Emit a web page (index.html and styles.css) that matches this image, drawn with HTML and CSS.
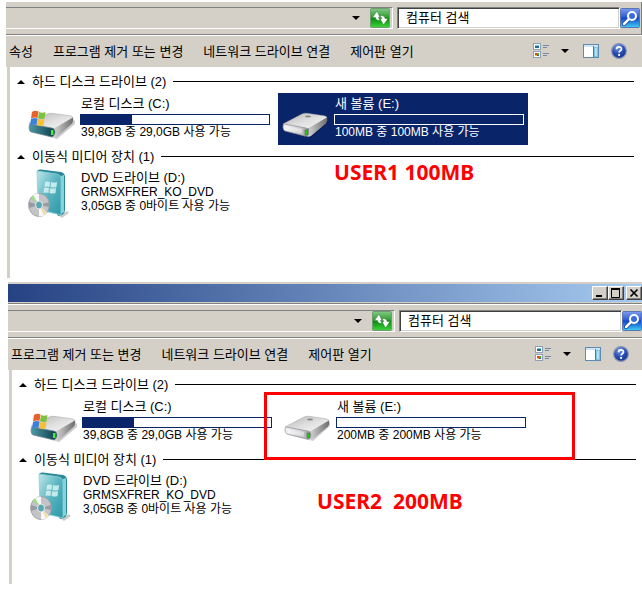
FILE: index.html
```html
<!DOCTYPE html>
<html lang="ko">
<head>
    <meta charset="UTF-8">
    <meta name="viewport" content="width=device-width, initial-scale=1.0">
    <title>컴퓨터</title>
    <link rel="stylesheet" href="styles.css">
</head>
<body>
    <svg class="defs" aria-hidden="true">
        <defs>
            <linearGradient id="green" x1="0" y1="0" x2="0" y2="1">
                <stop offset="0" stop-color="#84c884"/><stop offset=".45" stop-color="#2f9e35"/>
                <stop offset=".5" stop-color="#078a0d"/><stop offset="1" stop-color="#3fd43c"/>
            </linearGradient>
            <linearGradient id="blue" x1="0" y1="0" x2="0" y2="1">
                <stop offset="0" stop-color="#7d9cec"/><stop offset=".45" stop-color="#2c5bd6"/>
                <stop offset=".5" stop-color="#1446c4"/><stop offset="1" stop-color="#3fd0f8"/>
            </linearGradient>
            <linearGradient id="top" x1="0" y1="0" x2="1" y2="1">
                <stop offset="0" stop-color="#b4b4b4"/><stop offset=".5" stop-color="#dedede"/><stop offset="1" stop-color="#fafafa"/>
            </linearGradient>
            <linearGradient id="side" x1="0" y1="0" x2="1" y2="0">
                <stop offset="0" stop-color="#d8d8d8"/><stop offset="1" stop-color="#6c6c6c"/>
            </linearGradient>
            <linearGradient id="front" x1="0" y1="0" x2="1" y2="0">
                <stop offset="0" stop-color="#f4f4f6"/><stop offset=".7" stop-color="#c6c6cc"/><stop offset="1" stop-color="#8c8c90"/>
            </linearGradient>
            <linearGradient id="teal" x1="0" y1="0" x2="1" y2="0">
                <stop offset="0" stop-color="#4c9aa6"/><stop offset="1" stop-color="#0c3c48"/>
            </linearGradient>
            <linearGradient id="case" x1="0" y1="0" x2="1" y2="1">
                <stop offset="0" stop-color="#bfe6ea"/><stop offset=".5" stop-color="#58b4c0"/><stop offset="1" stop-color="#2c98a8"/>
            </linearGradient>
            <radialGradient id="help" cx=".4" cy=".25" r=".8">
                <stop offset="0" stop-color="#7c9ce8"/><stop offset=".5" stop-color="#2c50b8"/><stop offset="1" stop-color="#14308c"/>
            </radialGradient>
        </defs>

        <symbol id="icon-refresh" viewBox="0 0 20 20">
            <rect x=".5" y=".5" width="19" height="19" rx="1" fill="url(#green)" stroke="#6f9c70"/>
            <path d="M7 3L2.500 9.500H5.500Q5.500 12.500 9.500 12.500V10.500Q8.500 10.500 8.500 9.500H10z" fill="#fff" stroke="#2b7a30" stroke-width=".5"/>
            <path d="M13.500 17L18 10.500H15Q15 7.500 10.500 7.500V9.500Q12 9.500 12 10.500H10z" fill="#fff" stroke="#2b7a30" stroke-width=".5"/>
        </symbol>
        <symbol id="icon-search" viewBox="0 0 20 20">
            <rect x=".5" y=".5" width="19" height="19" rx="1" fill="url(#blue)" stroke="#5c74b4"/>
            <path d="M9 11l-5 5" stroke="#123c9c" stroke-width="4" stroke-linecap="round"/>
            <path d="M9 11l-5 5" stroke="#fff" stroke-width="2.500" stroke-linecap="round"/>
            <circle cx="12" cy="8" r="4" fill="#3a6cdc" stroke="#fff" stroke-width="2"/>
        </symbol>
        <symbol id="icon-views" viewBox="0 0 16 16">
            <rect x=".5" y=".5" width="7" height="6" fill="#fff" stroke="#8ca0b8"/>
            <path d="M2 2h4v1H2z" fill="#7cc4ec"/><path d="M2 3h4v2H2z" fill="#20708c"/>
            <rect x=".5" y="8.500" width="7" height="6" fill="#fff" stroke="#8ca0b8"/>
            <path d="M2 10h2v2H2z" fill="#e83c20"/><path d="M4 10h2v2H4z" fill="#48b030"/>
            <path d="M2 12h2v1H2z" fill="#f0c020"/><path d="M4 12h2v1H4z" fill="#2858c8"/>
            <path d="M10 2.500h6M10 4.500h4M10 10.500h6M10 12.500h4" stroke="#7888a0"/>
        </symbol>
        <symbol id="icon-pane" viewBox="0 0 16 14">
            <rect x=".5" y=".5" width="15" height="13" fill="#fff" stroke="#5c8cb0"/>
            <path d="M1 1h14v2H1z" fill="#d0e4f4"/>
            <path d="M10 3h5v10h-5z" fill="#7cc4e0"/><path d="M10.500 2v11" stroke="#4080a8"/>
            <path d="M12 4h2v8h-2z" fill="#b4e0f0"/>
        </symbol>
        <symbol id="icon-help" viewBox="0 0 16 16">
            <circle cx="8" cy="8" r="7.400" fill="url(#help)" stroke="#8c98b4" stroke-width="1.200"/>
            <path d="M5.600 6.200C5.600 3.200 10.500 3.200 10.500 6c0 1.800-2.400 1.800-2.400 3.600" fill="none" stroke="#fff" stroke-width="1.700"/>
            <circle cx="8.100" cy="11.900" r="1.100" fill="#fff"/>
        </symbol>
        <symbol id="icon-drive" viewBox="0 0 48 48">
            <path d="M6 37l24 6 17-15v-4L27 39z" fill="#000" opacity=".18"/>
            <path d="M2 29L21 19q2-1 5-.700l17 2.500q3 .6 3 2L29 33q-2 1-5 .6L4 30z" fill="url(#top)" stroke="#a4a4a4" stroke-width=".5"/>
            <path d="M28 33L46 22.500q1 3-1 6L30 41q-2 1-4 .500z" fill="url(#side)"/>
            <path d="M3 29l22 4q3 .5 3 4t-3 4.300L4 36q-2-1-2-4t1-3z" fill="url(#front)" stroke="#909090" stroke-width=".7"/>
            <path d="M5 31l16 3v4L5 35z" fill="#fff" opacity=".4"/>
            <path d="M24 35h2.500v5H24z" fill="#28c818" stroke="#386830" stroke-width=".5"/>
            <ellipse cx="27" cy="21.500" rx="3" ry="1" fill="#888"/>
        </symbol>
        <symbol id="icon-system" viewBox="0 0 48 48">
            <path d="M6 37l24 7 18-15v-4L28 40z" fill="#000" opacity=".2"/>
            <path d="M2 28L20 19q2-1 5-.700l18 2.500q3 .6 3 2L29 33q-2 1-5 .6L4 30z" fill="url(#top)" stroke="#a4a4a4" stroke-width=".5"/>
            <path d="M28 33L46 22.500q1 3-1 6L30 42q-2 1-4 .500z" fill="url(#side)"/>
            <path d="M3 29l22 4q3 .5 3 4t-3 5L4 37q-2-1-2-4t1-4z" fill="url(#teal)" stroke="#789" stroke-width=".7"/>
            <path d="M24 35h2.500v5H24z" fill="#48f030"/>
            <path d="M5 17q3-2 6.500-.500l-1 6.500q-3-1-6.500 .5z" fill="#e8602c"/>
            <path d="M12 17q3 1.500 6.500 0l-1 6.500q-3 1-6.500-.5z" fill="#80c040"/>
            <path d="M4 24q3-1.500 6.500-.500l-1 6.500q-3-1-6.500 .5z" fill="#3c80d8"/>
            <path d="M11 24q3 1 6.500 0l-1 6.500q-3 1-6.500-.5z" fill="#f8c030"/>
        </symbol>
        <symbol id="icon-dvd" viewBox="0 0 48 52">
            <path d="M32 48l8-5 2 2-7 5z" fill="#000" opacity=".2"/>
            <path d="M10 3q1-2 4-1.500L34 4q4 1 4 5v33q0 3-3 5l-4 1z" fill="#2a8998"/>
            <path d="M10 3l20 3q4 1 4 5v36L13 42q-2-1-2-4z" fill="url(#case)" stroke="#8ed0d8" stroke-width=".8"/>
            <path d="M34 8l3-1v37l-3 2z" fill="#84d4dc"/>
            <g fill="#d8f4f4" opacity=".85">
                <path d="M18 14q2-1 5 0l-.5 5q-3-1-5 0z"/><path d="M24 14q3 1 6 0l-.5 5q-3 1-6 0z"/>
                <path d="M17 20q2-1 5 0l-.5 5q-3-1-5 0z"/><path d="M23 20q3 1 6 0l-.5 5q-3 1-6 0z"/>
            </g>
            <ellipse cx="12" cy="37" rx="10.500" ry="11.500" fill="#c4c4c8" stroke="#949498" stroke-width=".7"/>
            <path d="M12 37L5 28q3-3 7-2.500zM12 37l8 8q-4 4-8 3.500z" fill="#f8f8fa"/>
            <path d="M12 37l10-3v5zM12 37L2 40v-6z" fill="#9a9aa2"/>
            <path d="M12 37L4 30l2-3z" fill="#98e080"/><path d="M12 37l5 10 2-2z" fill="#f0dc90"/>
            <ellipse cx="12" cy="37" rx="3.500" ry="4" fill="#58a8b4" stroke="#e8e8e8"/>
        </symbol>
    </svg>

    <section class="window window-first">
        <div class="nav">
            <div class="address">
                <span class="caret"></span>
                <button class="icon-btn" aria-label="새로 고침"><svg><use href="#icon-refresh"/></svg></button>
            </div>
            <input class="search" type="text" value="컴퓨터 검색" aria-label="컴퓨터 검색">
            <button class="icon-btn" aria-label="검색"><svg><use href="#icon-search"/></svg></button>
        </div>
        <div class="toolbar">
            <button>속성</button>
            <button>프로그램 제거 또는 변경</button>
            <button>네트워크 드라이브 연결</button>
            <button>제어판 열기</button>
            <div class="tools">
                <button aria-label="보기"><svg class="views"><use href="#icon-views"/></svg></button>
                <button class="more" aria-label="추가 옵션"><span class="caret"></span></button>
                <button aria-label="미리 보기 창"><svg class="pane"><use href="#icon-pane"/></svg></button>
                <button aria-label="도움말"><svg class="help"><use href="#icon-help"/></svg></button>
            </div>
        </div>
        <div class="content">
            <h2 class="group">하드 디스크 드라이브 (2)</h2>
            <ul class="drives">
                <li class="drive">
                    <svg class="drive-icon"><use href="#icon-system"/></svg>
                    <div class="info">
                        <p class="name">로컬 디스크 (C:)</p>
                        <div class="bar"><div class="used" style="width: 27%"></div></div>
                        <p class="detail">39,8GB 중 29,0GB 사용 가능</p>
                    </div>
                </li>
                <li class="drive selected">
                    <svg class="drive-icon"><use href="#icon-drive"/></svg>
                    <div class="info">
                        <p class="name">새 볼륨 (E:)</p>
                        <div class="bar"></div>
                        <p class="detail">100MB 중 100MB 사용 가능</p>
                    </div>
                </li>
            </ul>
            <h2 class="group">이동식 미디어 장치 (1)</h2>
            <ul class="drives">
                <li class="drive media">
                    <svg class="drive-icon"><use href="#icon-dvd"/></svg>
                    <div class="info">
                        <p class="name">DVD 드라이브 (D:)</p>
                        <p class="detail">GRMSXFRER_KO_DVD</p>
                        <p class="detail">3,05GB 중 0바이트 사용 가능</p>
                    </div>
                </li>
            </ul>
        </div>
        <p class="note note-first">USER1 100MB</p>
    </section>

    <section class="window window-second">
        <div class="titlebar">
            <button aria-label="최소화"><svg viewBox="0 0 12 10"><path d="M2 8h6" stroke="#000" stroke-width="2"/></svg></button>
            <button aria-label="최대화"><svg viewBox="0 0 12 10"><path d="M1 1h9M1.500 1v8.500h8V1" fill="none" stroke="#000"/><path d="M1 1h9" stroke="#000" stroke-width="2"/></svg></button>
            <button class="close" aria-label="닫기"><svg viewBox="0 0 12 10"><path d="M2.500 1.500l7 7M9.500 1.500l-7 7" stroke="#000" stroke-width="1.700"/></svg></button>
        </div>
        <div class="nav">
            <div class="address">
                <span class="caret"></span>
                <button class="icon-btn" aria-label="새로 고침"><svg><use href="#icon-refresh"/></svg></button>
            </div>
            <input class="search" type="text" value="컴퓨터 검색" aria-label="컴퓨터 검색">
            <button class="icon-btn" aria-label="검색"><svg><use href="#icon-search"/></svg></button>
        </div>
        <div class="toolbar">
            <button>프로그램 제거 또는 변경</button>
            <button>네트워크 드라이브 연결</button>
            <button>제어판 열기</button>
            <div class="tools">
                <button aria-label="보기"><svg class="views"><use href="#icon-views"/></svg></button>
                <button class="more" aria-label="추가 옵션"><span class="caret"></span></button>
                <button aria-label="미리 보기 창"><svg class="pane"><use href="#icon-pane"/></svg></button>
                <button aria-label="도움말"><svg class="help"><use href="#icon-help"/></svg></button>
            </div>
        </div>
        <div class="content">
            <h2 class="group">하드 디스크 드라이브 (2)</h2>
            <ul class="drives">
                <li class="drive">
                    <svg class="drive-icon"><use href="#icon-system"/></svg>
                    <div class="info">
                        <p class="name">로컬 디스크 (C:)</p>
                        <div class="bar"><div class="used" style="width: 27%"></div></div>
                        <p class="detail">39,8GB 중 29,0GB 사용 가능</p>
                    </div>
                </li>
                <li class="drive">
                    <svg class="drive-icon"><use href="#icon-drive"/></svg>
                    <div class="info">
                        <p class="name">새 볼륨 (E:)</p>
                        <div class="bar"></div>
                        <p class="detail">200MB 중 200MB 사용 가능</p>
                    </div>
                    <div class="highlight"></div>
                </li>
            </ul>
            <h2 class="group">이동식 미디어 장치 (1)</h2>
            <ul class="drives">
                <li class="drive media">
                    <svg class="drive-icon"><use href="#icon-dvd"/></svg>
                    <div class="info">
                        <p class="name">DVD 드라이브 (D:)</p>
                        <p class="detail">GRMSXFRER_KO_DVD</p>
                        <p class="detail">3,05GB 중 0바이트 사용 가능</p>
                    </div>
                </li>
            </ul>
        </div>
        <p class="note note-second">USER2&nbsp; 200MB</p>
    </section>
</body>
</html>
```

FILE: styles.css
```css
* {
    margin: 0;
    padding: 0;
    box-sizing: border-box;
}

body {
    padding-top: 2px;
    background: #fff;
    color: #000;
    font-family: "Liberation Sans", "Noto Sans CJK KR", sans-serif;
    font-size: 13px;
    overflow-x: hidden;
}

button {
    border: none;
    background: none;
    color: inherit;
    font: inherit;
    white-space: nowrap;
}

svg {
    display: block;
}

.defs {
    position: absolute;
    width: 0;
    height: 0;
}

.window {
    position: relative;
}

.window-first {
    margin-left: 6px;
}

.window-second {
    margin-top: 4px;
    margin-left: 8px;
}

/* title bar */
.titlebar {
    display: flex;
    justify-content: flex-end;
    align-items: center;
    height: 23px;
    border-top: 2px solid #d4d0c8;
    border-bottom: 1px solid #fff;
    box-shadow: inset 0 -1px #808080, inset 0 -2px #d4d0c8;
    background: linear-gradient(to right, #264283, #a6caf0);
    padding-bottom: 2px;
}

.titlebar button {
    width: 16px;
    height: 14px;
    padding: 1px;
    background: #d4d0c8;
    border: 1px solid;
    border-color: #fff #404040 #404040 #fff;
    box-shadow: inset -1px -1px #808080;
}

.titlebar .close {
    margin-left: 2px;
}

.titlebar svg {
    width: 12px;
    height: 10px;
}

/* address and search */
.nav {
    display: flex;
    height: 33px;
    padding: 5px 2px 5px 0;
    background: #d4d0c8;
    border-bottom: 1px solid #808080;
}

.window-first .nav {
    box-shadow: inset -1px 0 #808080;
}

.window-second .nav {
    padding-right: 0;
}

.address {
    flex: 1;
    display: flex;
    align-items: center;
    justify-content: flex-end;
    gap: 10px;
    padding-right: 2px;
    border: 1px solid;
    border-color: #808080 #fff #fff transparent;
    border-left: none;
}

.caret {
    display: block;
    border: 4px solid transparent;
    border-top-color: #000;
    border-bottom: none;
}

.icon-btn svg {
    width: 20px;
    height: 20px;
}

.icon-btn {
    align-self: center;
}

.search {
    width: 223px;
    height: 22px;
    margin-left: 4px;
    padding: 0 8px 3px;
    background: #fff;
    border: 1px solid;
    border-color: #808080 #fff #fff #808080;
    border-radius: 0;
    box-shadow: inset 1px 1px #404040, inset -1px -1px #d4d0c8;
    font: inherit;
    color: #000;
}

/* toolbar */
.toolbar {
    display: flex;
    align-items: center;
    gap: 20px;
    height: 32px;
    padding: 0 15px 2px 3px;
    background: #d4d0c8;
    border-top: 1px solid #fff;
}

.window-second .toolbar {
    padding-right: 13px;
}

.tools {
    display: flex;
    align-items: center;
    gap: 12px;
    margin-left: auto;
}

.more {
    margin-right: 2px;
}

.views,
.help {
    width: 16px;
    height: 16px;
}

.pane {
    width: 16px;
    height: 14px;
}

/* drive list */
.content {
    min-height: 211px;
    margin-left: 1px;
    padding: 3px 8px 0 7px;
    border-left: 3px solid #d4d0c8;
}

.window-second .content {
    min-height: 214px;
    padding-right: 6px;
}

.group {
    display: flex;
    align-items: center;
    gap: 7px;
    height: 23px;
    font-size: 13px;
    font-weight: normal;
    line-height: 20px;
}

.group::before {
    content: "";
    border: 4px solid transparent;
    border-bottom-color: #000;
    border-top: none;
}

.group::after {
    content: "";
    flex: 1;
    height: 1px;
    background: #000;
}

.drives {
    display: flex;
    gap: 4px;
    padding-left: 7px;
    list-style: none;
}

.drive {
    position: relative;
    display: flex;
    gap: 5px;
    width: 250px;
    height: 52px;
    padding: 0 4px 0 3px;
}

.drive-icon {
    width: 48px;
    height: 52px;
}

.info {
    flex: 1;
}

.name {
    padding-left: 1px;
    line-height: 21px;
}

.detail {
    padding-left: 1px;
    font-size: 12px;
    line-height: 14px;
}

.bar {
    height: 11px;
    border: 1px solid #0a246a;
}

.used {
    height: 100%;
    background: #0a246a;
}

.selected {
    background: #0a246a;
    color: #fff;
}

.selected .bar {
    border-color: #fff;
}

.media .info {
    padding-top: 3px;
}

.media .name {
    line-height: 14px;
}

/* red marks over the windows */
.highlight {
    position: absolute;
    top: -4px;
    left: -16px;
    width: 311px;
    height: 68px;
    border: 3px solid #f00;
}

.note {
    position: absolute;
    color: #f00;
    font-family: "Noto Sans", "Noto Sans CJK KR", sans-serif;
    font-size: 21px;
    font-weight: bold;
    line-height: 28px;
}

.note-first {
    top: 156px;
    left: 328px;
}

.note-second {
    top: 205px;
    left: 309px;
}
```
